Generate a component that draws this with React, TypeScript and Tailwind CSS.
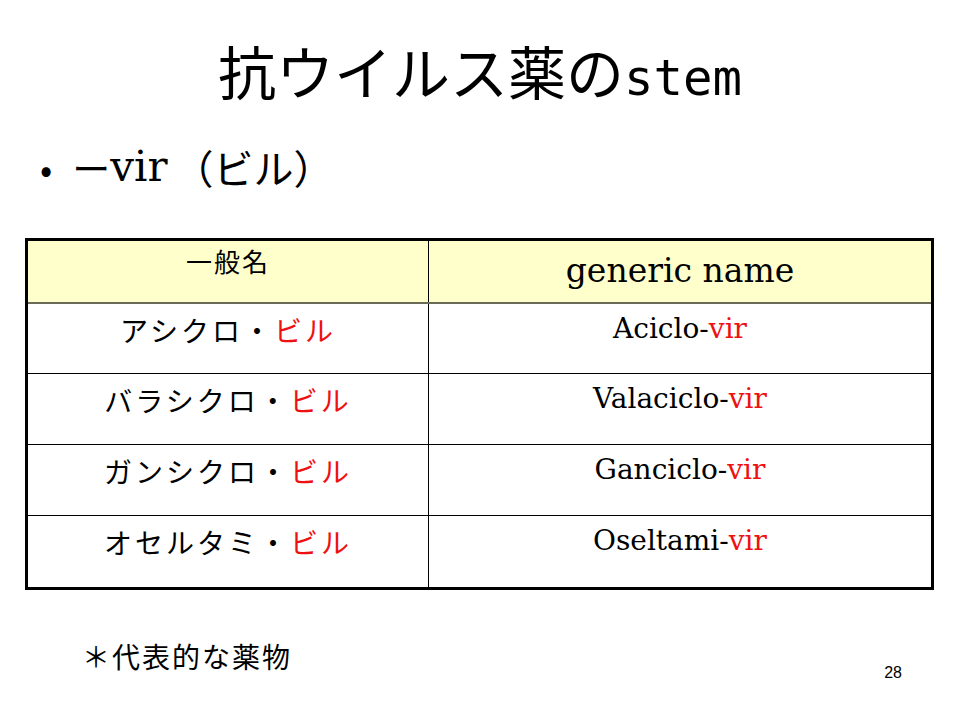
import React from 'react';

const rows = [
  { jp: 'アシクロ', en: 'Aciclo' },
  { jp: 'バラシクロ', en: 'Valaciclo' },
  { jp: 'ガンシクロ', en: 'Ganciclo' },
  { jp: 'オセルタミ', en: 'Oseltami' },
];

const jpFont = "font-['Noto_Sans_CJK_JP',sans-serif]";
const serifFont = "font-['DejaVu_Serif','Noto_Sans_CJK_JP',serif]";

const App: React.FC = () => {
  return (
    <div className="w-[960px] h-[720px] bg-white text-black overflow-hidden flex flex-col">
      {/* Title */}
      <h1 className={`pt-[40px] h-[100px] text-center text-[58px] leading-[60px] ${jpFont}`}>
        抗ウイルス薬の<span className="font-['DejaVu_Sans_Mono',monospace] text-[49px]">stem</span>
      </h1>

      {/* Bullet */}
      <div className="mt-[43px] ml-[40px] flex items-center h-[48px]">
        <span className={`${jpFont} text-[36px] leading-[48px] mr-[20px]`}>•</span>
        <span className={`${jpFont} text-[38px] leading-[48px]`}>ー</span>
        <span className={`${serifFont} text-[42px] leading-[48px]`}>vir</span>
        <span className={`${jpFont} text-[40px] leading-[48px] ml-[6px]`}>（ビル）</span>
      </div>

      {/* Table */}
      <div className="mt-[47px] ml-[25px] w-[909px] border-[3px] border-black">
        <div className="grid grid-cols-[401px_1fr] h-[63px] bg-[#ffffcc] border-b-2 border-[#6b6b5a]">
          <div className={`border-r border-black text-center pt-[5px] text-[26px] leading-[30px] tracking-[2px] ${jpFont}`}>
            一般名
          </div>
          <div className={`text-center pt-[11px] text-[33px] leading-[38px] ${serifFont}`}>generic name</div>
        </div>
        {rows.map((r, i) => (
          <div
            key={r.en}
            className={`grid grid-cols-[401px_1fr] ${i === 0 ? 'h-[70px]' : 'h-[71px]'} ${i < rows.length - 1 ? 'border-b border-black' : ''}`}
          >
            <div className={`border-r border-black text-center pt-[10px] text-[28px] leading-[32px] tracking-[3px] ${jpFont}`}>
              {r.jp}・<span className="text-[#ee1111]">ビル</span>
            </div>
            <div className={`text-center pt-[8px] text-[28px] leading-[34px] ${serifFont}`}>
              {r.en}-<span className="text-[#ee1111]">vir</span>
            </div>
          </div>
        ))}
      </div>

      {/* Footer */}
      <div className="flex items-start justify-between">
        <div className={`mt-[49px] ml-[82px] text-[28px] leading-[34px] tracking-[2px] ${jpFont}`}>＊代表的な薬物</div>
        <div className="mt-[73px] mr-[58px] text-[16px] leading-[20px] font-['Liberation_Sans',sans-serif]">28</div>
      </div>
    </div>
  );
};

export default App;
